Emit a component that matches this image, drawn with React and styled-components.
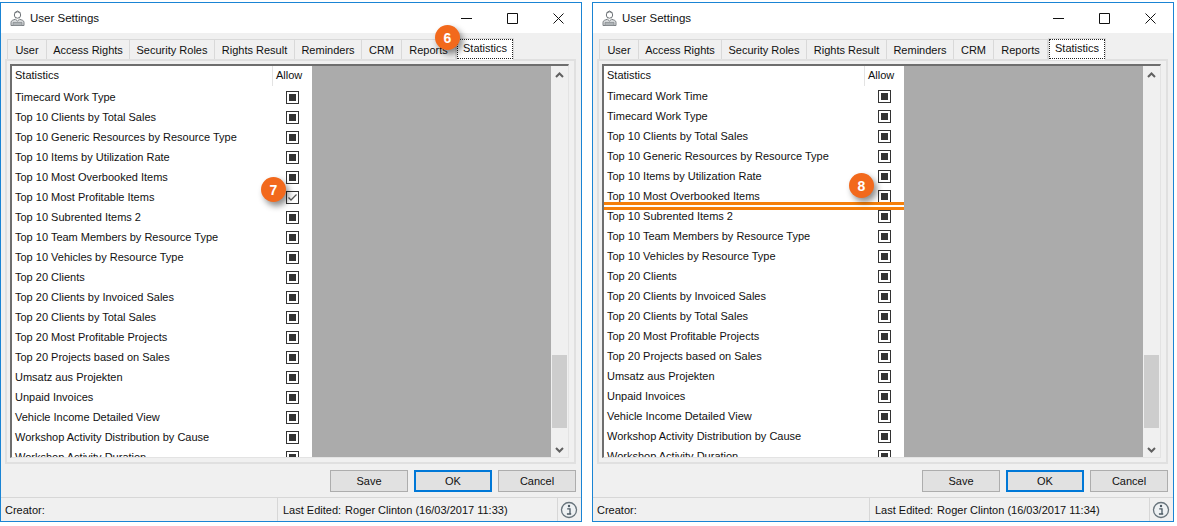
import React from "react";
import styled, { createGlobalStyle } from "styled-components";

const GlobalStyle = createGlobalStyle`
  html, body {
    margin: 0;
    padding: 0;
    background: #fff;
  }
`;

const Page = styled.div`
  display: flex;
  gap: 10px;
  padding-top: 2px;
  width: 1177px;
  height: 524px;
  box-sizing: border-box;
  font-family: "Liberation Sans", Arial, sans-serif;
  font-size: 11px;
  color: #111;
`;

const Window = styled.div`
  position: relative;
  width: 582px;
  height: 520px;
  box-sizing: border-box;
  border: 1px solid #1a84d4;
  background: #f0f0f0;
  display: flex;
  flex-direction: column;
`;

const TitleBar = styled.div`
  height: 30px;
  background: #fff;
  display: flex;
  align-items: center;
  padding-left: 9px;
  gap: 4px;
  font-size: 11.5px;
`;

const TitleText = styled.span`
  flex: 1;
`;

const Controls = styled.div`
  display: flex;
  align-items: center;
  gap: 35px;
  padding-right: 17px;
`;

const Tabs = styled.div`
  display: flex;
  align-items: flex-end;
  height: 26px;
  padding-left: 6px;
`;

const Tab = styled.div`
  width: ${(p) => p.$w}px;
  height: ${(p) => (p.$active ? 22 : 20)}px;
  box-sizing: border-box;
  border: 1px solid #d9d9d9;
  border-bottom: none;
  border-left: ${(p) => (p.$first || p.$active ? "1px solid #d9d9d9" : "none")};
  background: ${(p) => (p.$active ? "#fff" : "#f0f0f0")};
  display: flex;
  align-items: center;
  justify-content: center;
  position: relative;
  z-index: ${(p) => (p.$active ? 1 : 0)};
  margin-bottom: ${(p) => (p.$active ? "-1px" : 0)};
  ${(p) => p.$active && "outline: 1px dotted #222; outline-offset: -2px; padding-bottom: 4px;"}
`;

const TabPanel = styled.div`
  margin: 0 5px 0 4px;
  height: 405px;
  box-sizing: border-box;
  border: 2px solid #e0e0e0;
  background: #f0f0f0;
  padding: 3px 5px 4px 3px;
`;

const ListArea = styled.div`
  height: 394px;
  box-sizing: border-box;
  border-top: 2px solid #6e6e6e;
  border-left: 2px solid #6e6e6e;
  border-right: 1px solid #e3e3e3;
  border-bottom: 1px solid #e3e3e3;
  display: flex;
`;

const Grid = styled.div`
  width: 300px;
  background: #fff;
  overflow: hidden;
  display: flex;
  flex-direction: column;
`;

const HeaderRow = styled.div`
  flex: none;
  height: 20px;
  display: flex;
  align-items: center;
  position: relative;
  z-index: 1;
  background: #fff;
`;

const HeaderCell = styled.div`
  padding-left: 3px;
  width: ${(p) => (p.$allow ? "auto" : "260px")};
  height: 20px;
  line-height: 18px;
  box-sizing: border-box;
  border-left: ${(p) => (p.$allow ? "1px solid #e3e3e3" : "none")};
`;

const Rows = styled.div`
  margin-top: ${(p) => p.$offset}px;
`;

const Row = styled.div`
  height: 20px;
  display: flex;
  align-items: center;
  justify-content: space-between;
  padding: 0 13px 0 3px;
`;

const RowLabel = styled.span`
  white-space: nowrap;
`;

const Check = styled.span`
  width: 13px;
  height: 13px;
  box-sizing: border-box;
  border: 1px solid #333;
  background: #fff;
  display: flex;
  align-items: center;
  justify-content: center;
  &::after {
    content: "";
    display: ${(p) => (p.$checked ? "none" : "block")};
    width: 7px;
    height: 7px;
    background: #333;
  }
`;

const GreyPane = styled.div`
  flex: 1;
  background: #ababab;
`;

const Scrollbar = styled.div`
  width: 17px;
  background: #f0f0f0;
  display: flex;
  flex-direction: column;
  align-items: center;
  padding-top: 6px;
  box-sizing: border-box;
`;

const Track = styled.div`
  flex: 1;
  width: 100%;
  display: flex;
  flex-direction: column;
  justify-content: flex-end;
  align-items: center;
  padding-bottom: 4px;
  box-sizing: border-box;
`;

const Thumb = styled.div`
  width: 15px;
  height: ${(p) => p.$h}px;
  margin-bottom: ${(p) => p.$bottom}px;
  background: #cdcdcd;
`;

const Footer = styled.div`
  height: 33px;
  display: flex;
  justify-content: flex-end;
  align-items: flex-start;
  gap: 6px;
  padding: 6px 5px 0 0;
  box-sizing: border-box;
`;

const Button = styled.div`
  width: 78px;
  height: 22px;
  box-sizing: border-box;
  background: #e1e1e1;
  border: ${(p) => (p.$primary ? "2px solid #0078d7" : "1px solid #adadad")};
  display: flex;
  align-items: center;
  justify-content: center;
`;

const StatusBar = styled.div`
  flex: 1;
  border-top: 1px solid #d7d7d7;
  display: flex;
  align-items: center;
`;

const StatusCell = styled.div`
  width: ${(p) => p.$w}px;
  height: 100%;
  box-sizing: border-box;
  padding-left: ${(p) => p.$pad}px;
  display: flex;
  align-items: center;
  gap: 4px;
  border-right: ${(p) => (p.$divider ? "1px solid #d7d7d7" : "none")};
  white-space: nowrap;
`;

const InfoCell = styled.div`
  flex: 1;
  display: flex;
  justify-content: center;
  padding-right: 2px;
`;

const Badge = styled.div`
  position: absolute;
  left: ${(p) => p.$x}px;
  top: ${(p) => p.$y}px;
  width: 25px;
  height: 25px;
  border-radius: 50%;
  background: #f2691c;
  color: #fff;
  font-weight: bold;
  font-size: 14px;
  display: flex;
  align-items: center;
  justify-content: center;
  box-shadow: 3px 4px 6px rgba(0, 0, 0, 0.45);
  z-index: 3;
`;

const DropLine = styled.div`
  position: absolute;
  left: 11px;
  top: 199px;
  width: 300px;
  height: 8px;
  box-sizing: border-box;
  border-top: 3px solid #f57f0a;
  border-bottom: 3px solid #f57f0a;
  background: #fff;
  z-index: 2;
`;

const UserIcon = () => (
  <svg width="16" height="17" viewBox="0 0 16 17" fill="none">
    <circle cx="7.5" cy="5" r="3.2" fill="#fff" stroke="#6f7478" />
    <path d="M4.5 2.8 7.5 1 10.5 2.8" stroke="#6f7478" />
    <path d="M1 15.5v-3.2C1 10.5 3 10 5.5 9.2L7.5 11l2-1.8c2.5.8 4.5 1.3 4.5 3.100v3.2z" fill="#d5d8da" stroke="#7c8185" />
    <path d="M3 12.500h9v3H3z" fill="#aeb3b6" stroke="#7c8185" strokeWidth=".6" />
  </svg>
);

const MinIcon = () => (
  <svg width="11" height="11" viewBox="0 0 11 11"><path d="M0 5.500h11" stroke="#111" /></svg>
);
const MaxIcon = () => (
  <svg width="11" height="11" viewBox="0 0 11 11" fill="none"><path d="M.5.500h10v10H.5z" stroke="#111" /></svg>
);
const CloseIcon = () => (
  <svg width="11" height="11" viewBox="0 0 11 11" fill="none"><path d="M.5.500l10 10M10.500.500l-10 10" stroke="#111" /></svg>
);

const ChevronUp = () => (
  <svg width="9" height="6" viewBox="0 0 9 6" fill="none"><path d="M1 5 4.500 1.500 8 5" stroke="#606060" strokeWidth="2" /></svg>
);
const ChevronDown = () => (
  <svg width="9" height="6" viewBox="0 0 9 6" fill="none"><path d="M1 1 4.500 4.500 8 1" stroke="#606060" strokeWidth="2" /></svg>
);

const Tick = () => (
  <svg width="11" height="11" viewBox="0 0 11 11" fill="none"><path d="M1.500 5.500 4 8 9.500 2.500" stroke="#555" strokeWidth="1.300" /></svg>
);

const InfoIcon = () => (
  <svg width="18" height="18" viewBox="0 0 18 18" fill="none">
    <circle cx="9" cy="9" r="7.500" fill="#eef1f3" stroke="#68747c" strokeWidth="1.300" />
    <circle cx="9" cy="5" r="1.200" fill="#4c5a64" />
    <path d="M7.200 7.800H10v5.200h1.200M6.900 13h3.500" stroke="#4c5a64" strokeWidth="1.300" />
  </svg>
);

const tabs = [
  ["User", 40],
  ["Access Rights", 83],
  ["Security Roles", 85],
  ["Rights Result", 80],
  ["Reminders", 67],
  ["CRM", 40],
  ["Reports", 54],
  ["Statistics", 58],
];

const shared = [
  "Top 10 Subrented Items 2",
  "Top 10 Team Members by Resource Type",
  "Top 10 Vehicles by Resource Type",
  "Top 20 Clients",
  "Top 20 Clients by Invoiced Sales",
  "Top 20 Clients by Total Sales",
  "Top 20 Most Profitable Projects",
  "Top 20 Projects based on Sales",
  "Umsatz aus Projekten",
  "Unpaid Invoices",
  "Vehicle Income Detailed View",
  "Workshop Activity Distribution by Cause",
  "Workshop Activity Duration",
];

const leftRows = [
  "Timecard Work Type",
  "Top 10 Clients by Total Sales",
  "Top 10 Generic Resources by Resource Type",
  "Top 10 Items by Utilization Rate",
  "Top 10 Most Overbooked Items",
  "Top 10 Most Profitable Items",
  ...shared,
];

const rightRows = [
  "Timecard Work Time",
  "Timecard Work Type",
  "Top 10 Clients by Total Sales",
  "Top 10 Generic Resources by Resource Type",
  "Top 10 Items by Utilization Rate",
  "Top 10 Most Overbooked Items",
  ...shared,
];

const SettingsWindow = ({ rows, offset, checked, edited, children }) => (
  <Window>
    <TitleBar>
      <UserIcon />
      <TitleText>User Settings</TitleText>
      <Controls>
        <MinIcon />
        <MaxIcon />
        <CloseIcon />
      </Controls>
    </TitleBar>
    <Tabs>
      {tabs.map(([name, w], i) => (
        <Tab key={name} $w={w} $first={i === 0} $active={name === "Statistics"}>
          {name}
        </Tab>
      ))}
    </Tabs>
    <TabPanel>
      <ListArea>
        <Grid>
          <HeaderRow>
            <HeaderCell>Statistics</HeaderCell>
            <HeaderCell $allow>Allow</HeaderCell>
          </HeaderRow>
          <Rows $offset={offset}>
            {rows.map((r) => (
              <Row key={r}>
                <RowLabel>{r}</RowLabel>
                <Check $checked={r === checked}>{r === checked && <Tick />}</Check>
              </Row>
            ))}
          </Rows>
        </Grid>
        <GreyPane />
        <Scrollbar>
          <ChevronUp />
          <Track>
            <Thumb $h={73} $bottom={19} />
            <ChevronDown />
          </Track>
        </Scrollbar>
      </ListArea>
    </TabPanel>
    <Footer>
      <Button>Save</Button>
      <Button $primary>OK</Button>
      <Button>Cancel</Button>
    </Footer>
    <StatusBar>
      <StatusCell $w={277} $pad={4} $divider>Creator:</StatusCell>
      <StatusCell $w={280} $pad={5} $divider>
        <span>Last Edited:</span>
        <span>Roger Clinton ({edited})</span>
      </StatusCell>
      <InfoCell><InfoIcon /></InfoCell>
    </StatusBar>
    {children}
  </Window>
);

export default function App() {
  return (
    <>
      <GlobalStyle />
      <Page>
        <SettingsWindow
          rows={leftRows}
          offset={1}
          checked="Top 10 Most Profitable Items"
          edited="16/03/2017 11:33"
        >
          <Badge $x={434} $y={22}>6</Badge>
          <Badge $x={260} $y={174}>7</Badge>
        </SettingsWindow>
        <SettingsWindow rows={rightRows} offset={0} edited="16/03/2017 11:34">
          <DropLine />
          <Badge $x={256} $y={170}>8</Badge>
        </SettingsWindow>
      </Page>
    </>
  );
}
